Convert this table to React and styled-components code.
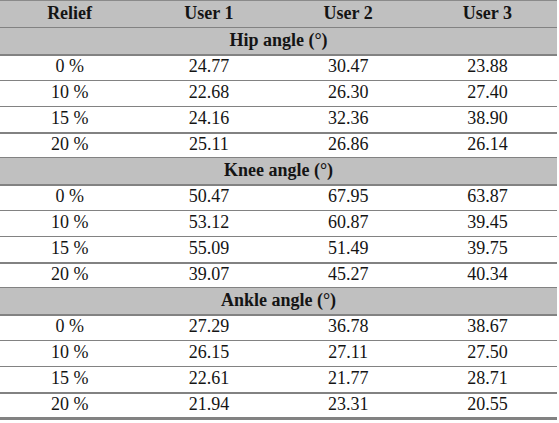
import React from "react";
import styled, { createGlobalStyle } from "styled-components";

const Global = createGlobalStyle`
  html, body { margin: 0; padding: 0; background: #ffffff; }
  body { font-family: "Liberation Serif", "Times New Roman", Tinos, "DejaVu Serif", serif; color: #111; }
`;

const serif = `"Liberation Serif", "Times New Roman", Tinos, "DejaVu Serif", serif`;

const Table = styled.table`
  width: 557px;
  border-collapse: collapse;
  table-layout: fixed;
  font-family: ${serif};
  font-size: 18px;
  color: #141414;
`;

const Row = styled.tr`
  background: ${(p) => (p.$shaded ? "#c0c0c0" : "#ffffff")};
  border-bottom: ${(p) => p.$bw}px solid #828282;
  border-top: ${(p) => (p.$top ? "1px solid #8a8a8a" : "none")};
`;

const HeadCell = styled.th`
  font-family: ${serif};
  font-size: 18px;
  font-weight: bold;
  text-align: center;
  vertical-align: middle;
  height: ${(p) => p.$h}px;
  box-sizing: border-box;
  padding: 0 0 2px 0;
  line-height: 20px;
`;

const Cell = styled.td`
  font-family: ${serif};
  font-size: 18px;
  text-align: center;
  vertical-align: middle;
  height: ${(p) => p.$h}px;
  box-sizing: border-box;
  padding: 0 0 3px 0;
  line-height: 20px;
`;

const sections = [
  {
    title: "Hip angle (°)",
    rows: [
      ["0 %", "24.77", "30.47", "23.88"],
      ["10 %", "22.68", "26.30", "27.40"],
      ["15 %", "24.16", "32.36", "38.90"],
      ["20 %", "25.11", "26.86", "26.14"],
    ],
  },
  {
    title: "Knee angle (°)",
    rows: [
      ["0 %", "50.47", "67.95", "63.87"],
      ["10 %", "53.12", "60.87", "39.45"],
      ["15 %", "55.09", "51.49", "39.75"],
      ["20 %", "39.07", "45.27", "40.34"],
    ],
  },
  {
    title: "Ankle angle (°)",
    rows: [
      ["0 %", "27.29", "36.78", "38.67"],
      ["10 %", "26.15", "27.11", "27.50"],
      ["15 %", "22.61", "21.77", "28.71"],
      ["20 %", "21.94", "23.31", "20.55"],
    ],
  },
];

const rowSpec = [
  { h: 26, bw: 1 },
  { h: 26, bw: 1 },
  { h: 26, bw: 2 },
  { h: 25, bw: 1 },
];

export default function App() {
  return (
    <>
      <Global />
      <Table>
        <colgroup>
          <col style={{ width: "25%" }} />
          <col style={{ width: "25%" }} />
          <col style={{ width: "25%" }} />
          <col style={{ width: "25%" }} />
        </colgroup>
        <thead>
          <Row $shaded $bw={1} $top>
            <HeadCell $h={27}>Relief</HeadCell>
            <HeadCell $h={27}>User 1</HeadCell>
            <HeadCell $h={27}>User 2</HeadCell>
            <HeadCell $h={27}>User 3</HeadCell>
          </Row>
        </thead>
        <tbody>
          {sections.map((s, si) => (
            <React.Fragment key={s.title}>
              <Row $shaded $bw={2}>
                <HeadCell $h={27} colSpan={4}>{s.title}</HeadCell>
              </Row>
              {s.rows.map((r, ri) => {
                const spec = rowSpec[ri];
                const last = si === sections.length - 1 && ri === 3;
                return (
                  <Row key={r[0]} $bw={last ? 3 : spec.bw}>
                    {r.map((c, ci) => (
                      <Cell key={ci} $h={last ? 24 : spec.h}>{c}</Cell>
                    ))}
                  </Row>
                );
              })}
            </React.Fragment>
          ))}
        </tbody>
      </Table>
    </>
  );
}
